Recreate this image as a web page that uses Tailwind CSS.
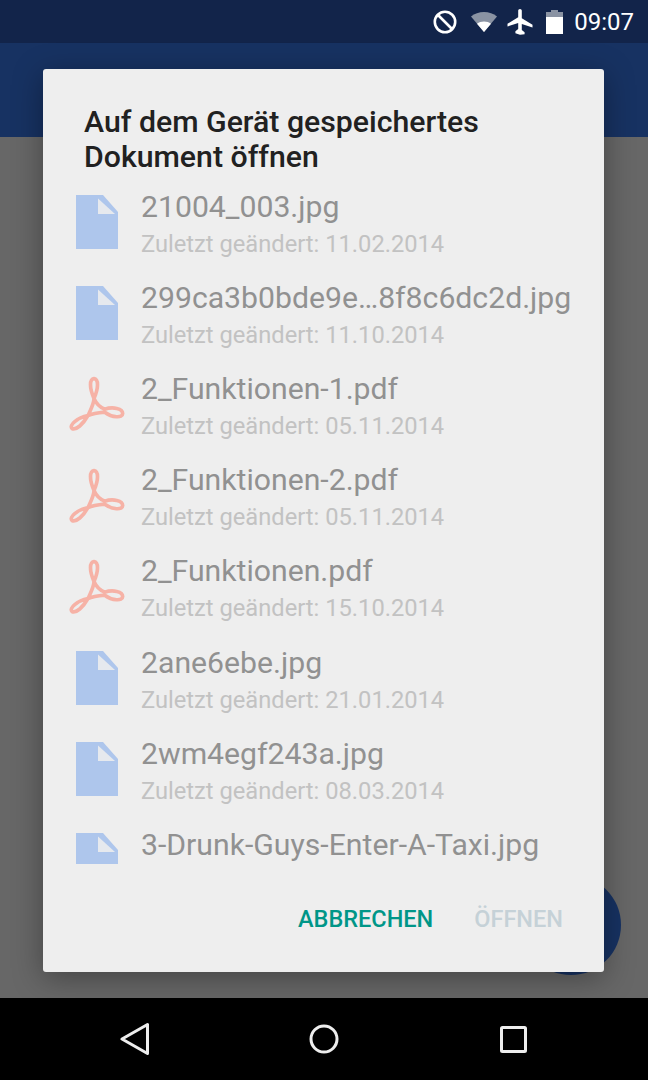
<!DOCTYPE html>
<html lang="de">
<head>
  <meta charset="UTF-8">
  <title>Dokument öffnen</title>
  <script src="https://cdn.jsdelivr.net/npm/@tailwindcss/browser@4"></script>
</head>
<body class="bg-black font-['Roboto',sans-serif]">
  <div class="relative w-[648px] h-[1080px] overflow-hidden flex flex-col">

    <!-- status bar -->
    <div class="h-[43px] bg-[#12244a] flex items-center justify-end pr-[14px] text-white">
      <svg width="26" height="26" viewBox="0 0 26 26" class="mr-[12px]" fill="none" stroke="#fff" stroke-width="2.6">
        <circle cx="13" cy="13" r="10.2"/>
        <path d="M6 6l14 14"/>
      </svg>
      <svg width="28" height="22" viewBox="0 0 28 22" class="mr-[9px]">
        <path d="M14 21L1 5.5C4.500 2.500 9 1 14 1s9.500 1.500 13 4.500z" fill="#8a93a3"/>
        <path d="M14 21L7 12.700C9 11.200 11.400 10.400 14 10.400s5 .8 7 2.300z" fill="#fff"/>
      </svg>
      <svg width="26" height="26" viewBox="0 0 26 26" class="mr-[13px]" fill="#fff">
        <path d="M11.200 1.800c0-1 .8-1.800 1.800-1.800s1.800.8 1.800 1.800v7.400l10.700 6.500v2.700l-10.700-3.300v6l2.800 2.100v2L13 25.700l-4.600-1.500v-2l2.800-2.100v-6L.5 17.400v-2.700l10.700-6.500z"/>
      </svg>
      <svg width="17" height="24" viewBox="0 0 17 24" class="mr-[11px]">
        <path d="M5 0h7v2h5v6H0V2h5z" fill="#8a93a3"/>
        <path d="M0 7h17v17H0z" fill="#fff"/>
      </svg>
      <span class="text-[24px] leading-none">09:07</span>
    </div>

    <!-- dimmed app behind the dialog -->
    <div class="h-[94px] bg-[#173262]"></div>
    <div class="flex-1 bg-[#676767]"></div>

    <!-- nav bar -->
    <div class="h-[82px] bg-black grid grid-cols-3 px-[40px] items-center justify-items-center">
      <svg width="30" height="34" viewBox="0 0 30 34" fill="none" stroke="#eee" stroke-width="3" stroke-linejoin="round">
        <path d="M27.500 2.500v29L2 17z"/>
      </svg>
      <svg width="30" height="30" viewBox="0 0 30 30" fill="none" stroke="#eee" stroke-width="3">
        <circle cx="15" cy="15" r="13"/>
      </svg>
      <svg width="27" height="27" viewBox="0 0 27 27" fill="none" stroke="#eee" stroke-width="3" stroke-linejoin="round">
        <rect x="1.500" y="1.500" width="24" height="24" rx="1"/>
      </svg>
    </div>

    <!-- floating button under the scrim -->
    <div class="absolute left-[521px] top-[875px] w-[100px] h-[100px] rounded-full bg-[#173262]"></div>

    <!-- dialog -->
    <div class="absolute left-[43px] top-[69px] w-[561px] h-[903px] bg-[#eeeeee] rounded-[3px] shadow-[0_6px_30px_rgba(0,0,0,0.35)] flex flex-col">
      <h1 class="pt-[35px] pl-[41px] h-[107px] text-[30.25px] leading-[35px] font-medium text-[#212121]">Auf dem Gerät gespeichertes<br>Dokument öffnen</h1>

      <div class="h-[688px] overflow-hidden">
        <div class="h-[91.2px] flex items-center pl-[24px]">
          <div class="w-[60px] flex justify-center shrink-0">
            <svg width="42" height="54" viewBox="0 0 42 54"><path d="M0 0h27l15 17v37H0z" fill="#aec6ec"/><path d="M22 3.500v15.500h17z" fill="#e6e9ee"/></svg>
          </div>
          <div class="ml-[14px] pt-[4px]">
            <div class="text-[30.2px] leading-[34px] text-[#919191]">21004_003.jpg</div>
            <div class="text-[23.7px] leading-[28px] mt-[6px] text-[#c2c2c2]">Zuletzt geändert: 11.02.2014</div>
          </div>
        </div>
        <div class="h-[91.2px] flex items-center pl-[24px]">
          <div class="w-[60px] flex justify-center shrink-0">
            <svg width="42" height="54" viewBox="0 0 42 54"><path d="M0 0h27l15 17v37H0z" fill="#aec6ec"/><path d="M22 3.500v15.500h17z" fill="#e6e9ee"/></svg>
          </div>
          <div class="ml-[14px] pt-[4px]">
            <div class="text-[30.2px] leading-[34px] text-[#919191]">299ca3b0bde9e…8f8c6dc2d.jpg</div>
            <div class="text-[23.7px] leading-[28px] mt-[6px] text-[#c2c2c2]">Zuletzt geändert: 11.10.2014</div>
          </div>
        </div>
        <div class="h-[91.2px] flex items-center pl-[24px]">
          <div class="w-[60px] flex justify-center shrink-0">
            <svg width="60" height="57" viewBox="37 30 180 170" fill="none" stroke="#f6b2a6" stroke-width="11" stroke-linejoin="round"><path d="M118 40C132 42 132 68 118 100C125 116 135 126 150 132C175 124 204 130 204 145C204 160 172 157 150 141C130 143 112 146 100 151C85 177 65 196 52 190C42 180 68 158 100 151C110 130 118 115 118 100C104 68 104 42 118 40Z"/></svg>
          </div>
          <div class="ml-[14px] pt-[4px]">
            <div class="text-[30.2px] leading-[34px] text-[#919191]">2_Funktionen-1.pdf</div>
            <div class="text-[23.7px] leading-[28px] mt-[6px] text-[#c2c2c2]">Zuletzt geändert: 05.11.2014</div>
          </div>
        </div>
        <div class="h-[91.2px] flex items-center pl-[24px]">
          <div class="w-[60px] flex justify-center shrink-0">
            <svg width="60" height="57" viewBox="37 30 180 170" fill="none" stroke="#f6b2a6" stroke-width="11" stroke-linejoin="round"><path d="M118 40C132 42 132 68 118 100C125 116 135 126 150 132C175 124 204 130 204 145C204 160 172 157 150 141C130 143 112 146 100 151C85 177 65 196 52 190C42 180 68 158 100 151C110 130 118 115 118 100C104 68 104 42 118 40Z"/></svg>
          </div>
          <div class="ml-[14px] pt-[4px]">
            <div class="text-[30.2px] leading-[34px] text-[#919191]">2_Funktionen-2.pdf</div>
            <div class="text-[23.7px] leading-[28px] mt-[6px] text-[#c2c2c2]">Zuletzt geändert: 05.11.2014</div>
          </div>
        </div>
        <div class="h-[91.2px] flex items-center pl-[24px]">
          <div class="w-[60px] flex justify-center shrink-0">
            <svg width="60" height="57" viewBox="37 30 180 170" fill="none" stroke="#f6b2a6" stroke-width="11" stroke-linejoin="round"><path d="M118 40C132 42 132 68 118 100C125 116 135 126 150 132C175 124 204 130 204 145C204 160 172 157 150 141C130 143 112 146 100 151C85 177 65 196 52 190C42 180 68 158 100 151C110 130 118 115 118 100C104 68 104 42 118 40Z"/></svg>
          </div>
          <div class="ml-[14px] pt-[4px]">
            <div class="text-[30.2px] leading-[34px] text-[#919191]">2_Funktionen.pdf</div>
            <div class="text-[23.7px] leading-[28px] mt-[6px] text-[#c2c2c2]">Zuletzt geändert: 15.10.2014</div>
          </div>
        </div>
        <div class="h-[91.2px] flex items-center pl-[24px]">
          <div class="w-[60px] flex justify-center shrink-0">
            <svg width="42" height="54" viewBox="0 0 42 54"><path d="M0 0h27l15 17v37H0z" fill="#aec6ec"/><path d="M22 3.500v15.500h17z" fill="#e6e9ee"/></svg>
          </div>
          <div class="ml-[14px] pt-[4px]">
            <div class="text-[30.2px] leading-[34px] text-[#919191]">2ane6ebe.jpg</div>
            <div class="text-[23.7px] leading-[28px] mt-[6px] text-[#c2c2c2]">Zuletzt geändert: 21.01.2014</div>
          </div>
        </div>
        <div class="h-[91.2px] flex items-center pl-[24px]">
          <div class="w-[60px] flex justify-center shrink-0">
            <svg width="42" height="54" viewBox="0 0 42 54"><path d="M0 0h27l15 17v37H0z" fill="#aec6ec"/><path d="M22 3.500v15.500h17z" fill="#e6e9ee"/></svg>
          </div>
          <div class="ml-[14px] pt-[4px]">
            <div class="text-[30.2px] leading-[34px] text-[#919191]">2wm4egf243a.jpg</div>
            <div class="text-[23.7px] leading-[28px] mt-[6px] text-[#c2c2c2]">Zuletzt geändert: 08.03.2014</div>
          </div>
        </div>
        <div class="h-[91.2px] flex items-center pl-[24px]">
          <div class="w-[60px] flex justify-center shrink-0">
            <svg width="42" height="54" viewBox="0 0 42 54"><path d="M0 0h27l15 17v37H0z" fill="#aec6ec"/><path d="M22 3.500v15.500h17z" fill="#e6e9ee"/></svg>
          </div>
          <div class="ml-[14px] pt-[4px]">
            <div class="text-[30.2px] leading-[34px] text-[#919191]">3-Drunk-Guys-Enter-A-Taxi.jpg</div>
            <div class="h-[34px]"></div>
          </div>
        </div>
      </div>

      <div class="flex-1 flex items-center justify-end pt-[4px] pr-[41px] gap-[41px] text-[23.5px] font-medium">
        <span class="text-[#009688]">ABBRECHEN</span>
        <span class="text-[#c5d1d7]">ÖFFNEN</span>
      </div>
    </div>
  </div>
</body>
</html>
